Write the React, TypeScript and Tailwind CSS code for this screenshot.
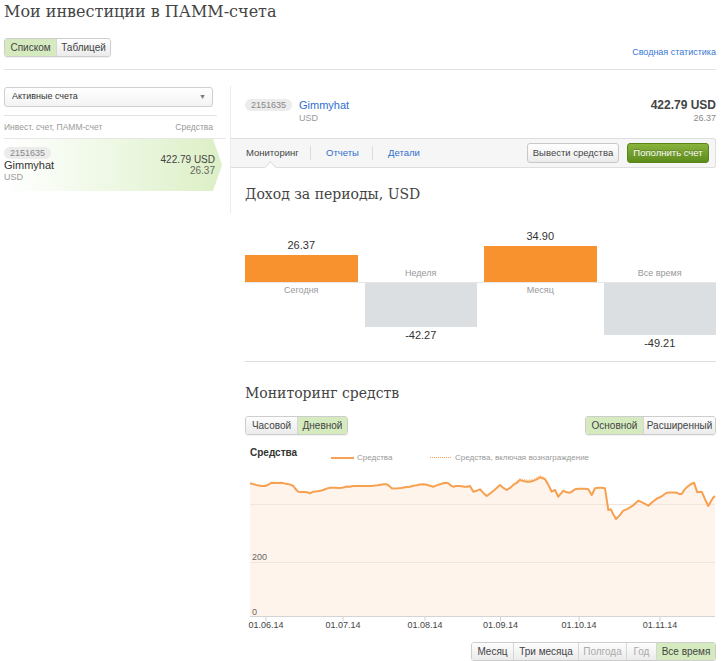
import React from "react";

const raw: [number, number][] = [
  [5, 18.3], [20, 21], [26.7, 17.7], [36.7, 17.7], [48.3, 21], [53.3, 26.7], [65, 28.3], [68, 26.7],
  [88, 22.7], [105, 21.7], [141.7, 19.3], [146.7, 23.3], [165, 21.7], [178.3, 19.3], [188.3, 21.7],
  [198.3, 18.3], [203.3, 18.3], [208.3, 21.7], [225, 21], [228.3, 26.7], [235, 24.3], [241.7, 31],
  [255, 20], [261.7, 25], [268.3, 20], [275, 15], [285, 16.7], [295, 12.3], [300, 14.3], [306.7, 26.7],
  [310, 25], [313.3, 31.7], [318.3, 25.7], [325, 27.7], [330, 24.3], [343.3, 24.3], [346.7, 30],
  [350, 23.3], [360, 23.3], [363.3, 45], [365.7, 44.3], [371, 54], [378.3, 45.7], [385, 42.3],
  [393.3, 35.7], [403.3, 40.7], [410, 35], [415, 32.3], [421.7, 27.7], [431.7, 27.7], [436.7, 29],
  [441.7, 22.3], [449, 17.7], [452.3, 27.3], [456.7, 26.7], [463.3, 41], [467.7, 33.3], [470, 31],
];

// densify with a little jitter so the line looks like daily data
const points = (() => {
  const out: [number, number][] = [];
  for (let i = 0; i < raw.length - 1; i++) {
    const [x1, y1] = raw[i];
    const [x2, y2] = raw[i + 1];
    const n = Math.max(1, Math.round((x2 - x1) / 3));
    for (let j = 0; j < n; j++) {
      const t = j / n;
      const x = x1 + (x2 - x1) * t;
      const y = y1 + (y2 - y1) * t + (j > 0 ? Math.sin(x * 1.9) * 0.6 : 0);
      out.push([x, y]);
    }
  }
  out.push(raw[raw.length - 1]);
  return out;
})();

const linePath = "M" + points.map(([x, y]) => `${x.toFixed(1)},${y.toFixed(1)}`).join(" L");
const areaPath = linePath + " L470,151 L5,151 Z";
const dottedPath =
  "M" +
  points
    .filter(([x]) => x > 268 && x < 304)
    .map(([x, y]) => `${x.toFixed(1)},${(y - 1.6).toFixed(1)}`)
    .join(" L");

const ticks = [
  { x: 21, label: "01.06.14" },
  { x: 98, label: "01.07.14" },
  { x: 180, label: "01.08.14" },
  { x: 255.5, label: "01.09.14" },
  { x: 334, label: "01.10.14" },
  { x: 415, label: "01.11.14" },
];

type SegItem = { label: string; w: string; active?: boolean; dim?: boolean };

const Seg = ({ items }: { items: SegItem[] }) => (
  <div className="inline-flex h-[19px] border border-[#cdcdcd] rounded-[3px] overflow-hidden shadow-[0_1px_1px_rgba(0,0,0,0.06)]">
    {items.map((it, i) => (
      <div
        key={it.label}
        className={`${it.w} flex items-center justify-center text-[10px] leading-[17px] ${i > 0 ? "border-l border-[#d6d6d6]" : ""} ${
          it.active ? "bg-[#d5ebbf] text-[#444]" : "bg-linear-to-b from-[#fdfdfd] to-[#ebebeb]"
        } ${it.dim ? "text-[#aaa]" : it.active ? "" : "text-[#444]"}`}
      >
        {it.label}
      </div>
    ))}
  </div>
);

const Badge = () => (
  <span className="block w-fit h-[12px] px-[6px] rounded-full bg-[#ececec] text-[9px] leading-[12px] text-[#888]">
    2151635
  </span>
);

export default function App() {
  return (
    <div className="w-[725px] h-[661px] overflow-hidden bg-white pl-[4px] pr-[9px] font-['Liberation_Sans',Arial,sans-serif] text-[#333]">
      <h1 className="h-[38px] font-['DejaVu_Serif',serif] text-[16px] leading-[24px] font-normal text-[#444]">
        Мои инвестиции в ПАММ-счета
      </h1>

      <div className="flex items-end justify-between h-[19px]">
        <Seg
          items={[
            { label: "Списком", w: "w-[51px]", active: true },
            { label: "Таблицей", w: "w-[54px]" },
          ]}
        />
        <a className="mb-[-2px] text-[9px] leading-[13px] text-[#3a78d4]">Сводная статистика</a>
      </div>

      <div className="mt-[12px] border-t border-[#e2e2e2]" />

      <div className="flex mt-[16px]">
        {/* left list */}
        <div className="w-[226px] shrink-0">
          <div className="mt-[1px] w-[209px] h-[20px] border border-[#cfcfcf] rounded-[3px] bg-linear-to-b from-white to-[#f3f3f3] flex items-center justify-between pl-[7px] pr-[6px]">
            <span className="text-[9px] text-[#333]">Активные счета</span>
            <span className="text-[7px] text-[#777]">▼</span>
          </div>
          <div className="mt-[8px] w-[213px] h-[23px] pr-[4px] border-t border-[#e3e3e3] flex items-center justify-between text-[8.5px] text-[#999]">
            <span>Инвест. счет, ПАММ-счет</span>
            <span>Средства</span>
          </div>
          <div className="w-[222px] border-t border-[#e6e6e6]">
            <div className="w-[218px] h-[52px] flex justify-between pt-[8px] pr-[7px] bg-linear-to-r from-white via-[#eef8e4] to-[#dcefc5] [clip-path:polygon(0_0,calc(100%-9px)_0,100%_50%,calc(100%-9px)_100%,0_100%)]">
              <div>
                <Badge />
                <div className="text-[11px] leading-[13px] text-[#333]">Gimmyhat</div>
                <div className="text-[9px] leading-[11px] text-[#999]">USD</div>
              </div>
              <div className="pt-[7px] text-right text-[10px] leading-[11px] text-[#444]">
                <div>422.79 USD</div>
                <div className="text-[#666]">26.37</div>
              </div>
            </div>
          </div>
        </div>

        {/* right panel */}
        <div className="flex-1">
          <div className="border-l border-[#ececec]">
            <div className="h-[52px] pl-[14px] pt-[12px] flex justify-between">
              <div className="flex items-start gap-[7px]">
                <span className="mt-[1px]">
                  <Badge />
                </span>
                <div>
                  <div className="text-[11px] leading-[14px] text-[#2f6fcf]">Gimmyhat</div>
                  <div className="text-[9px] leading-[12px] text-[#999]">USD</div>
                </div>
              </div>
              <div className="text-right">
                <div className="text-[12px] leading-[14px] font-bold text-[#444]">422.79 USD</div>
                <div className="text-[9px] leading-[12px] text-[#888]">26.37</div>
              </div>
            </div>

            <div className="relative h-[30px] border-y border-r border-[#dedede] rounded-r-[3px] bg-[#f6f6f6] flex items-center pl-[15px] pr-[6px] text-[9.5px]">
              <span className="w-[50px] whitespace-nowrap text-[#444]">Мониторинг</span>
              <span className="ml-[14px] w-px h-[14px] bg-[#dcdcdc]" />
              <span className="ml-[15px] w-[31px] whitespace-nowrap text-[#2f6fcf]">Отчеты</span>
              <span className="ml-[15px] w-px h-[14px] bg-[#dcdcdc]" />
              <span className="ml-[15px] whitespace-nowrap text-[#2f6fcf]">Детали</span>
              <div className="ml-auto flex gap-[8px]">
                <div className="w-[92px] h-[20px] border border-[#c9c9c9] rounded-[3px] bg-linear-to-b from-white to-[#ebebeb] flex items-center justify-center text-[#444]">
                  Вывести средства
                </div>
                <div className="w-[82px] h-[20px] border border-[#5b8519] rounded-[3px] bg-linear-to-b from-[#88b33c] to-[#5e8c1b] flex items-center justify-center text-white [text-shadow:0_-1px_0_rgba(0,0,0,0.25)]">
                  Пополнить счет
                </div>
              </div>
              <span className="absolute left-[35px] bottom-[-5px] w-[9px] h-[9px] rotate-45 bg-white border-l border-t border-[#dedede]" />
            </div>

            <div className="h-[45px] pl-[14px] pt-[16px]">
              <h2 className="font-['DejaVu_Serif',serif] text-[14px] leading-[20px] font-normal text-[#444]">
                Доход за периоды, USD
              </h2>
            </div>
          </div>

          <div className="pl-[15px]">
            {/* period bars */}
            <div className="grid grid-cols-4 gap-x-[7px] h-[69px] items-end text-center">
              <div>
                <div className="text-[11px] leading-[14px] mb-[3px] text-[#333]">26.37</div>
                <div className="h-[27px] bg-[#f8922f]" />
              </div>
              <div className="text-[9px] leading-[12px] mb-[3px] text-[#999]">Неделя</div>
              <div>
                <div className="text-[11px] leading-[14px] mb-[3px] text-[#333]">34.90</div>
                <div className="h-[36px] bg-[#f8922f]" />
              </div>
              <div className="text-[9px] leading-[12px] mb-[3px] text-[#999]">Все время</div>
            </div>
            <div className="h-px bg-[#e6e6e6]" />
            <div className="grid grid-cols-4 gap-x-[7px] h-[78px] items-start text-center">
              <div className="mt-[1px] text-[9px] leading-[12px] text-[#999]">Сегодня</div>
              <div>
                <div className="h-[44px] bg-[#dcdfe2]" />
                <div className="mt-[1px] text-[11px] leading-[14px] text-[#333]">-42.27</div>
              </div>
              <div className="mt-[1px] text-[9px] leading-[12px] text-[#999]">Месяц</div>
              <div>
                <div className="h-[52px] bg-[#dcdfe2]" />
                <div className="mt-[1px] text-[11px] leading-[14px] text-[#333]">-49.21</div>
              </div>
            </div>
            <div className="border-t border-[#dddddd]" />

            <h2 className="pt-[21px] font-['DejaVu_Serif',serif] text-[14px] leading-[20px] font-normal text-[#444]">
              Мониторинг средств
            </h2>

            <div className="mt-[13px] flex justify-between">
              <Seg
                items={[
                  { label: "Часовой", w: "w-[51px]" },
                  { label: "Дневной", w: "w-[50px]", active: true },
                ]}
              />
              <Seg
                items={[
                  { label: "Основной", w: "w-[57px]", active: true },
                  { label: "Расширенный", w: "w-[72px]" },
                ]}
              />
            </div>

            {/* equity chart */}
            <div className="mt-[12px] h-[18px] flex items-start">
              <div className="w-[86px] pl-[5px] text-[10px] leading-[12px] font-bold text-[#333]">Средства</div>
              <div className="w-[99px] mt-[5px] flex items-center">
                <span className="w-[23px] h-[2px] bg-[#f7a155]" />
                <span className="ml-[3px] text-[8px] leading-[11px] text-[#999]">Средства</span>
              </div>
              <div className="mt-[5px] flex items-center">
                <span className="w-[21px] border-t border-dotted border-[#f7a155]" />
                <span className="ml-[4px] text-[8px] leading-[11px] text-[#999]">Средства, включая вознаграждение</span>
              </div>
            </div>

            <svg width="471" height="167" viewBox="0 0 471 167" className="block">
              <path d={areaPath} fill="#fff4ec" />
              <line x1="5" x2="470" y1="39.5" y2="39.5" stroke="#f1e4db" />
              <line x1="5" x2="470" y1="97.5" y2="97.5" stroke="#f1e4db" />
              <line x1="5" x2="470" y1="151.5" y2="151.5" stroke="#d4d4d4" />
              <path d={dottedPath} fill="none" stroke="#f8a45a" strokeWidth="1" strokeDasharray="1 1.5" />
              <path d={linePath} fill="none" stroke="#f7a050" strokeWidth="2" strokeLinejoin="round" />
              <text x="7" y="95" fontSize="9" fill="#666" fontFamily="Liberation Sans, Arial, sans-serif">
                200
              </text>
              <text x="7" y="150" fontSize="9" fill="#666" fontFamily="Liberation Sans, Arial, sans-serif">
                0
              </text>
              {ticks.map((t) => (
                <g key={t.label}>
                  <line x1={t.x} x2={t.x} y1="152" y2="156" stroke="#cfcfcf" />
                  <text
                    x={t.x}
                    y="163"
                    fontSize="9"
                    fill="#444"
                    textAnchor="middle"
                    fontFamily="Liberation Sans, Arial, sans-serif"
                  >
                    {t.label}
                  </text>
                </g>
              ))}
            </svg>

            <div className="mt-[10px] flex justify-end">
              <Seg
                items={[
                  { label: "Месяц", w: "w-[41px]" },
                  { label: "Три месяца", w: "w-[65px]" },
                  { label: "Полгода", w: "w-[48px]", dim: true },
                  { label: "Год", w: "w-[30px]", dim: true },
                  { label: "Все время", w: "w-[59px]", active: true },
                ]}
              />
            </div>
          </div>
        </div>
      </div>
    </div>
  );
}
